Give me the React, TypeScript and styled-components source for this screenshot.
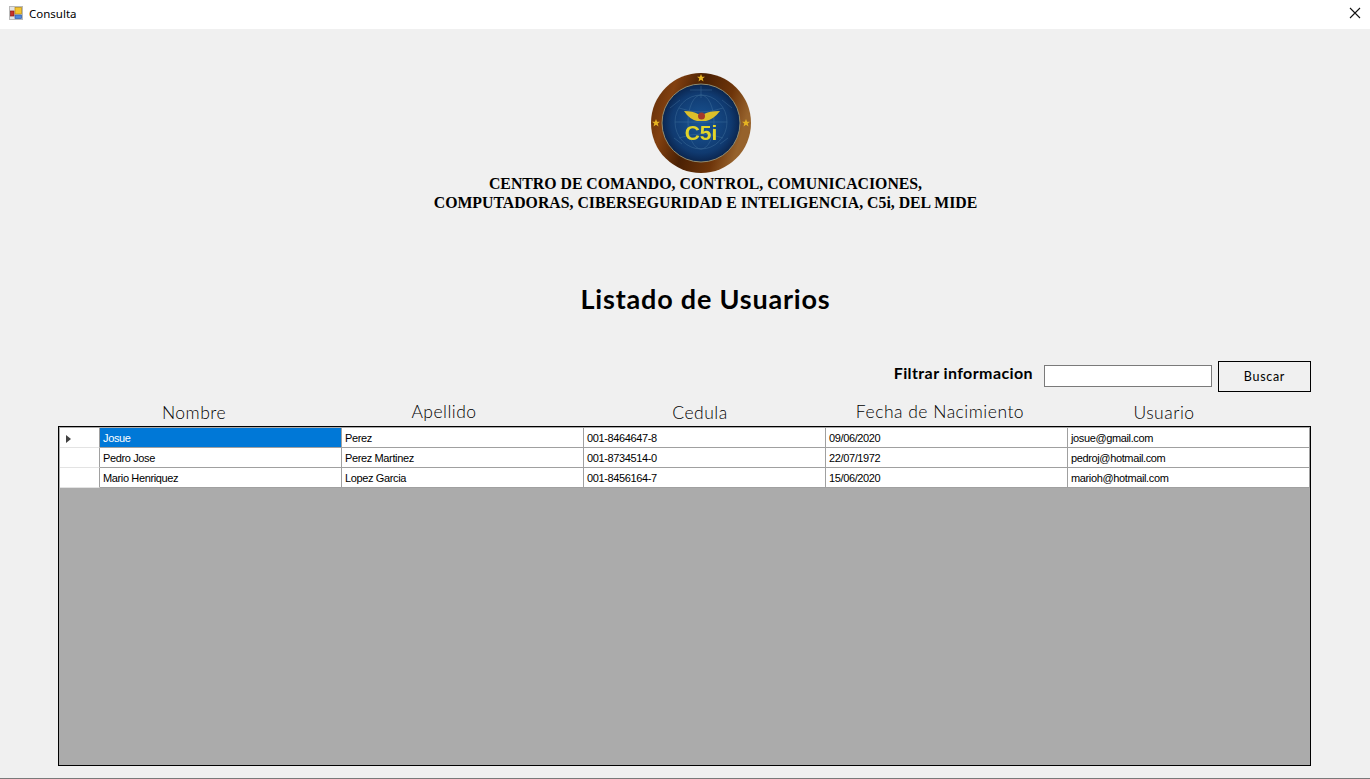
import styled, {createGlobalStyle} from "styled-components";

type User = {
   nombre: string;
   apellido: string;
   cedula: string;
   fecha: string;
   usuario: string;
};

const USERS: User[] = [
   {nombre: "Josue", apellido: "Perez", cedula: "001-8464647-8", fecha: "09/06/2020", usuario: "josue@gmail.com"},
   {nombre: "Pedro Jose", apellido: "Perez Martinez", cedula: "001-8734514-0", fecha: "22/07/1972", usuario: "pedroj@hotmail.com"},
   {nombre: "Mario Henriquez", apellido: "Lopez Garcia", cedula: "001-8456164-7", fecha: "15/06/2020", usuario: "marioh@hotmail.com"},
];

const HEADINGS = [
   {label: "Nombre", width: 240, lift: 0},
   {label: "Apellido", width: 260, lift: 1},
   {label: "Cedula", width: 252, lift: 0},
   {label: "Fecha de Nacimiento", width: 228, lift: 1},
   {label: "Usuario", width: 220, lift: 0},
];

const GlobalStyle = createGlobalStyle`
  html, body {
    margin: 0;
    padding: 0;
    background: #f0f0f0;
  }
  * {
    box-sizing: border-box;
  }
`;

const Window = styled.div`
  width: 1370px;
  height: 779px;
  display: flex;
  flex-direction: column;
  background: #f0f0f0;
  border-bottom: 1px solid #7a7a7a;
  overflow: hidden;
`;

const TitleBar = styled.header`
  height: 29px;
  flex: none;
  display: flex;
  align-items: center;
  padding: 0 9px;
  gap: 6px;
  background: #fff;
  font: 11.5px "Noto Sans", "Open Sans", sans-serif;
  color: #000;
`;

const TitleText = styled.span`
  flex: 1;
  margin-top: -2px;
`;

const CloseButton = styled.div`
  width: 14px;
  height: 14px;
  margin-right: -1px;
  margin-top: -3px;
  display: flex;
`;

const Content = styled.main`
  flex: 1;
  display: flex;
  flex-direction: column;
  padding-top: 43px;
`;

const Brand = styled.section`
  display: flex;
  flex-direction: column;
  align-items: center;
  padding-left: 41px;
`;

const LogoSvg = styled.svg`
  display: block;
  margin-left: -7px;
  filter: blur(0.4px);
`;

const BrandText = styled.h2`
  margin: 0;
  font: bold 15.8px/19px "Liberation Serif", serif;
  text-align: center;
  color: #000;
  white-space: nowrap;
`;

const Heading = styled.h1`
  margin: 68px 0 0;
  padding-left: 41px;
  height: 38px;
  font: bold 27px/38px "Lato", "Liberation Sans", sans-serif;
  letter-spacing: 0.8px;
  text-align: center;
  color: #000;
`;

const FilterRow = styled.div`
  margin-top: 43px;
  padding-right: 59px;
  height: 31px;
  display: flex;
  justify-content: flex-end;
  align-items: center;
`;

const FilterLabel = styled.label`
  font: bold 16px "Lato", "Liberation Sans", sans-serif;
  letter-spacing: 0.4px;
  color: #000;
  margin-right: 11px;
  margin-top: -8px;
`;

const FilterInput = styled.input`
  width: 168px;
  height: 22px;
  margin-right: 6px;
  margin-top: -2px;
  padding: 0 3px;
  border: 1px solid #7a7a7a;
  background: #fff;
  border-radius: 0;
  outline: none;
`;

const SearchButton = styled.button`
  width: 93px;
  height: 31px;
  padding: 0;
  border: 1px solid #000;
  border-radius: 0;
  background: #f0f0f0;
  font: 400 12.5px "Lato", "Liberation Sans", sans-serif;
  letter-spacing: 0.7px;
  color: #000;
`;

const ColumnHeads = styled.div`
  height: 34px;
  display: flex;
  padding-left: 74px;
`;

const ColumnHead = styled.div<{$width: number; $lift: number}>`
  width: ${p => p.$width}px;
  flex: none;
  text-align: center;
  font: 300 17.5px/22px "Lato", "Liberation Sans", sans-serif;
  letter-spacing: 0.5px;
  color: #000;
  padding-top: ${p => 10 - p.$lift}px;
`;

const Grid = styled.div`
  margin-left: 58px;
  width: 1253px;
  height: 340px;
  border: 1px solid #000;
  background: #ababab;
  padding: 1px;
`;

const Row = styled.div`
  height: 20px;
  display: flex;
`;

const RowHead = styled.div`
  width: 40px;
  flex: none;
  background: #fff;
  border-right: 1px solid #a0a0a0;
  border-bottom: 1px solid #e3e3e3;
  padding: 7px 0 0 6px;
`;

const Arrow = styled.div`
  width: 0;
  height: 0;
  border-left: 5px solid #404040;
  border-top: 4.5px solid transparent;
  border-bottom: 4.5px solid transparent;
`;

const Cell = styled.div<{$selected?: boolean}>`
  width: 242px;
  flex: none;
  padding: 0 3px;
  font: 11px/20px "Liberation Sans", Arial, sans-serif;
  letter-spacing: -0.37px;
  white-space: nowrap;
  overflow: hidden;
  color: ${p => (p.$selected ? "#fff" : "#000")};
  background: ${p => (p.$selected ? "#0078d7" : "#fff")};
  border-right: 1px solid #a0a0a0;
  border-bottom: 1px solid #a0a0a0;
`;

const FormIcon = () => (
    <svg width="14" height="14" viewBox="0 0 14 14" style={{marginTop: -3}}>
       <rect x="0.5" y="0.5" width="13" height="13" fill="#e4e4e4" stroke="#b9b9b9"/>
       <rect x="6" y="1.5" width="6.5" height="6.5" fill="#f4c430" stroke="#b58a10" strokeWidth="0.7"/>
       <rect x="1.5" y="5" width="3.5" height="5" fill="#c8302a" stroke="#8a1a15" strokeWidth="0.7"/>
       <rect x="6" y="9" width="6.5" height="3.5" fill="#4f86d9" stroke="#2c5aa8" strokeWidth="0.7"/>
    </svg>
);

const CloseIcon = () => (
    <svg width="14" height="14" viewBox="0 0 14 14">
       <path d="M2 2 L12 12 M12 2 L2 12" stroke="#111" strokeWidth="1.1" fill="none"/>
    </svg>
);

const Star = ({x, y}: {x: number; y: number}) => (
    <path transform={`translate(${x} ${y})`} fill="#e6b422"
          d="M0 -4 L1.1 -1.2 L4 -1.2 L1.7 0.6 L2.5 3.5 L0 1.8 L-2.5 3.5 L-1.7 0.6 L-4 -1.2 L-1.1 -1.2 Z"/>
);

const Logo = () => (
    <LogoSvg width="102" height="102" viewBox="0 0 102 102">
       <defs>
          <linearGradient id="ring" x1="0" y1="0" x2="1" y2="0.3">
             <stop offset="0" stopColor="#5c2a06"/>
             <stop offset="0.25" stopColor="#824010"/>
             <stop offset="0.5" stopColor="#4a2003"/>
             <stop offset="0.8" stopColor="#6e350a"/>
             <stop offset="1" stopColor="#96622c"/>
          </linearGradient>
          <radialGradient id="globe" cx="0.5" cy="0.5" r="0.55">
             <stop offset="0" stopColor="#1a5696"/>
             <stop offset="0.7" stopColor="#103a70"/>
             <stop offset="1" stopColor="#081c40"/>
          </radialGradient>
       </defs>
       <circle cx="50" cy="51" r="50" fill="url(#ring)"/>
       <circle cx="50" cy="51" r="39" fill="url(#globe)" stroke="#8f8c72" strokeWidth="1"/>
       <g fill="none" stroke="#4f7fa8" strokeWidth="0.6" opacity="0.6">
          <ellipse cx="50" cy="50" rx="26" ry="27"/>
          <ellipse cx="50" cy="50" rx="13" ry="27"/>
          <path d="M24 50 H76 M28 36 Q50 44 72 36 M28 66 Q50 58 72 66"/>
          <path d="M39 18 H61 M50 14 V26 M19 36 L29 28 M81 36 L71 28 M23 66 L31 72 M77 66 L69 72"/>
       </g>
       <path d="M33 39 Q42 39 47 42 L53 42 Q58 39 69 39 Q63 47 55 49 L46 49 Q38 47 33 39 Z" fill="#dcc02a"/>
       <circle cx="50.5" cy="44" r="3.5" fill="#a33a2c"/>
       <text x="50" y="68" textAnchor="middle" fontFamily="'Liberation Sans', sans-serif" fontWeight="bold" fontSize="21" fill="#e3d52a">C5i</text>
       <Star x={50} y={6}/>
       <Star x={5} y={51}/>
       <Star x={95} y={51}/>
    </LogoSvg>
);

export default function App() {
   return (
       <>
          <GlobalStyle/>
          <Window>
             <TitleBar>
                <FormIcon/>
                <TitleText>Consulta</TitleText>
                <CloseButton><CloseIcon/></CloseButton>
             </TitleBar>
             <Content>
                <Brand>
                   <Logo/>
                   <BrandText>
                      CENTRO DE COMANDO, CONTROL, COMUNICACIONES,<br/>
                      COMPUTADORAS, CIBERSEGURIDAD E INTELIGENCIA, C5i, DEL MIDE
                   </BrandText>
                </Brand>
                <Heading>Listado de Usuarios</Heading>
                <FilterRow>
                   <FilterLabel>Filtrar informacion</FilterLabel>
                   <FilterInput/>
                   <SearchButton>Buscar</SearchButton>
                </FilterRow>
                <ColumnHeads>
                   {HEADINGS.map(h => (
                       <ColumnHead key={h.label} $width={h.width} $lift={h.lift}>{h.label}</ColumnHead>
                   ))}
                </ColumnHeads>
                <Grid>
                   {USERS.map((user, i) => (
                       <Row key={user.cedula}>
                          <RowHead>{i === 0 && <Arrow/>}</RowHead>
                          <Cell $selected={i === 0}>{user.nombre}</Cell>
                          <Cell>{user.apellido}</Cell>
                          <Cell>{user.cedula}</Cell>
                          <Cell>{user.fecha}</Cell>
                          <Cell>{user.usuario}</Cell>
                       </Row>
                   ))}
                </Grid>
             </Content>
          </Window>
       </>
   );
}
